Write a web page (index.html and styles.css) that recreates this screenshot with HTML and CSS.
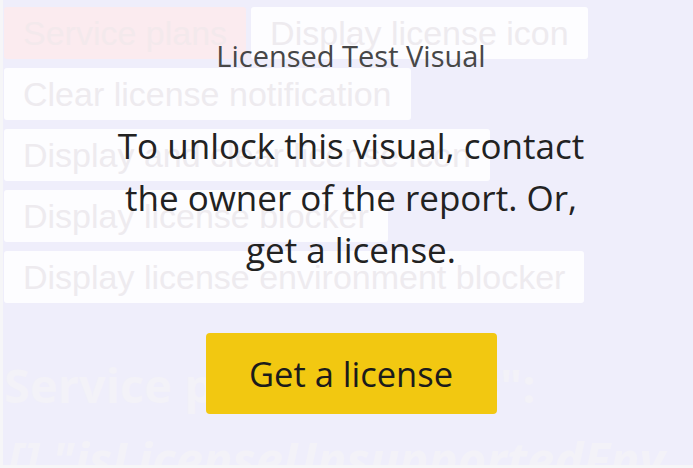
FILE: index.html
```html
<!DOCTYPE html>
<html>
<head>
<meta charset="utf-8">
<link rel="stylesheet" href="styles.css">
</head>
<body>
<div class="page">
  <div class="content">
    <div class="row">
      <button class="btn btn-pink">Service plans</button>
      <button class="btn">Display license icon</button>
    </div>
    <div class="row"><button class="btn">Clear license notification</button></div>
    <div class="row"><button class="btn">Display and clear license icon</button></div>
    <div class="row"><button class="btn">Display license blocker</button></div>
    <div class="row"><button class="btn">Display license environment blocker</button></div>
    <div class="big">Service plans options":</div>
    <div class="big-italic">[] "isLicenseUnsupportedEnv</div>
  </div>
  <div class="overlay">
    <div class="title">Licensed Test Visual</div>
    <div class="message">To unlock this visual, contact<br>the owner of the report. Or,<br>get a license.</div>
    <button class="cta">Get a license</button>
  </div>
</div>
</body>
</html>
```

FILE: styles.css
```css
html, body {
  margin: 0;
  padding: 0;
}
body {
  width: 693px;
  height: 468px;
  overflow: hidden;
  background: #f6f6f8;
  padding: 0 0 3px 3px;
  box-sizing: border-box;
}
.page {
  position: relative;
  height: 465px;
  background: #efeefb;
  overflow: hidden;
}
.content {
  display: flex;
  flex-direction: column;
  gap: 9px;
  padding: 7px 0 0 1px;
}
.row {
  display: flex;
  gap: 5px;
}
.btn {
  font-family: "Liberation Sans", Arial, sans-serif;
  font-size: 34px;
  color: #eeebef;
  background: #fdfdff;
  border: none;
  border-radius: 3px;
  height: 52px;
  padding: 0 19px;
  line-height: 52px;
}
.btn-pink {
  background: #fbebef;
  color: #f3e9ec;
}
.big {
  font-family: "Open Sans", sans-serif;
  font-weight: 700;
  font-size: 47px;
  color: #f3f2f8;
  margin-top: 43px;
  line-height: 60px;
  white-space: nowrap;
}
.big-italic {
  font-family: "Open Sans", sans-serif;
  font-weight: 700;
  font-style: italic;
  font-size: 49px;
  color: #f3f2f8;
  margin-top: 5px;
  padding-left: 3px;
  line-height: 60px;
  white-space: nowrap;
}
.overlay {
  position: absolute;
  inset: 0;
  padding-left: 6px;
  display: flex;
  flex-direction: column;
  align-items: center;
  font-family: "Open Sans", "Noto Sans", sans-serif;
  text-align: center;
}
.title {
  margin-top: 40px;
  font-size: 29px;
  line-height: 32px;
  color: #474747;
}
.message {
  margin-top: 48px;
  font-size: 35px;
  line-height: 52px;
  color: #222;
}
.cta {
  margin-top: 57px;
  width: 291px;
  height: 81px;
  background: #f2c811;
  border: none;
  border-radius: 4px;
  font-family: "Open Sans", "Noto Sans", sans-serif;
  font-size: 34.5px;
  color: #1b1b1b;
}
```
